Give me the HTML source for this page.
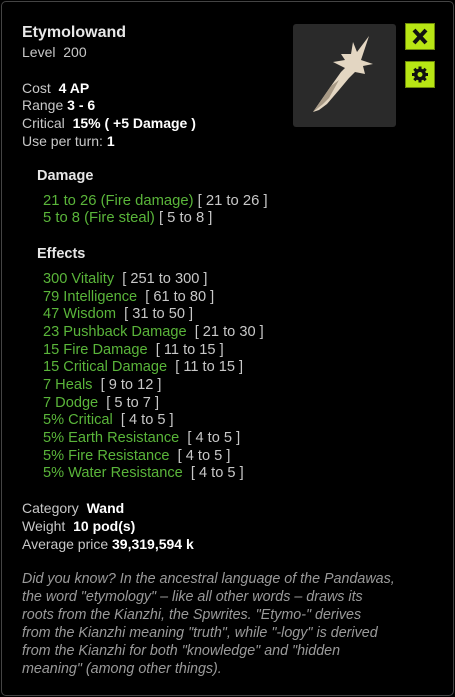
<!DOCTYPE html><html><head><style>
body{margin:0;background:#000;width:455px;height:697px;overflow:hidden;font-family:"Liberation Sans",sans-serif;font-size:14px;color:#c8c8c8}
.frame{position:absolute;left:1px;top:1px;width:451px;height:693px;border:1px solid #444;border-radius:5px}
.l{position:absolute;white-space:nowrap;line-height:18px}
b{color:#fff}
.g{color:#5ab53a}
.h{color:#e6e6e6;font-weight:bold;font-size:14.5px}
.btn{position:absolute;left:405px;width:30px;height:27px;background:#b8e614;border:1px solid #6f8a0a;box-sizing:border-box}
</style></head><body>
<div class="frame"></div>
<div class="l" style="left:22px;top:24px;font-size:16px;font-weight:bold;color:#e8e8e8">Etymolowand</div>
<div class="l" style="left:22px;top:43px">Level&nbsp; 200</div>
<div class="l" style="left:22px;top:79px">Cost&nbsp; <b>4 AP</b></div>
<div class="l" style="left:22px;top:96px">Range <b>3 - 6</b></div>
<div class="l" style="left:22px;top:114px">Critical&nbsp; <b>15% ( +5 Damage )</b></div>
<div class="l" style="left:22px;top:132px">Use per turn: <b>1</b></div>
<div style="position:absolute;left:293px;top:24px;width:103px;height:103px;background:#2a2a2a;border-radius:3px"></div>
<svg style="position:absolute;left:293px;top:24px" width="103" height="103" viewBox="0 0 103 103">
<polygon points="20,88 38,62 48,48 52,44 40,38 52,36 48,30 58,30 60,18 64,28 76,12 68,36 80,40 70,42 72,50 62,48 56,54 46,66 34,80 26,86" fill="#e3d6c2"/>
<polygon points="20,88 38,62 46,56 36,74 30,80" fill="#a89a86"/>
</svg>
<div class="btn" style="top:23px"><svg width="28" height="25" viewBox="0 0 28 25"><path d="M8 6L20 19M20 6L8 19" stroke="#111" stroke-width="4"/></svg></div>
<div class="btn" style="top:61px"><svg width="28" height="25" viewBox="0 0 28 25"><g transform="translate(14 12.5)" fill="#111"><circle r="6"/><g stroke="#111" stroke-width="3"><path d="M0-8V8M-8 0H8M-5.7-5.7L5.7 5.7M5.7-5.7L-5.7 5.7"/></g><circle r="2.5" fill="#b8e614"/></g></svg></div>
<div class="l h" style="left:37px;top:167px">Damage</div>
<div class="l" style="left:43px;top:192px;font-size:14.8px"><span class="g">21 to 26 (Fire damage)</span> [ 21 to 26 ]</div>
<div class="l" style="left:43px;top:209px;font-size:14.8px"><span class="g">5 to 8 (Fire steal)</span> [ 5 to 8 ]</div>
<div class="l h" style="left:37px;top:245px">Effects</div>
<div class="l" style="left:43px;top:271px;line-height:17.65px;font-size:14.6px">
<span class="g">300 Vitality</span>&nbsp; [ 251 to 300 ]<br>
<span class="g">79 Intelligence</span>&nbsp; [ 61 to 80 ]<br>
<span class="g">47 Wisdom</span>&nbsp; [ 31 to 50 ]<br>
<span class="g">23 Pushback Damage</span>&nbsp; [ 21 to 30 ]<br>
<span class="g">15 Fire Damage</span>&nbsp; [ 11 to 15 ]<br>
<span class="g">15 Critical Damage</span>&nbsp; [ 11 to 15 ]<br>
<span class="g">7 Heals</span>&nbsp; [ 9 to 12 ]<br>
<span class="g">7 Dodge</span>&nbsp; [ 5 to 7 ]<br>
<span class="g">5% Critical</span>&nbsp; [ 4 to 5 ]<br>
<span class="g">5% Earth Resistance</span>&nbsp; [ 4 to 5 ]<br>
<span class="g">5% Fire Resistance</span>&nbsp; [ 4 to 5 ]<br>
<span class="g">5% Water Resistance</span>&nbsp; [ 4 to 5 ]</div>
<div class="l" style="left:22px;top:499px">Category&nbsp; <b>Wand</b></div>
<div class="l" style="left:22px;top:517px">Weight&nbsp; <b>10 pod(s)</b></div>
<div class="l" style="left:22px;top:535px">Average price <b>39,319,594 k</b></div>
<div class="l" style="left:22px;top:570px;font-style:italic;color:#9a9a9a;white-space:normal;width:430px;font-size:14.3px">Did you know? In the ancestral language of the Pandawas,<br>the word "etymology" – like all other words – draws its<br>roots from the Kianzhi, the Spwrites. "Etymo-" derives<br>from the Kianzhi meaning "truth", while "-logy" is derived<br>from the Kianzhi for both "knowledge" and "hidden<br>meaning" (among other things).</div>
</body></html>
